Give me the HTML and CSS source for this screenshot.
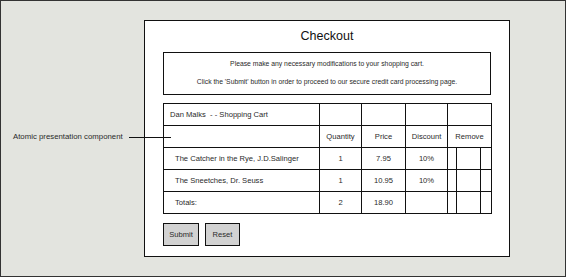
FILE: index.html
```html
<!DOCTYPE html>
<html lang="en">

<head>
    <meta charset="UTF-8">
    <meta name="viewport" content="width=device-width, initial-scale=1.0">
    <title>Checkout</title>
    <link rel="stylesheet" href="styles.css">
</head>

<body>

    <div class="frame">
        <div class="callout">
            <span class="callout-label">Atomic presentation component</span>
            <span class="callout-line"></span>
        </div>

        <div class="checkout-panel">
            <h1>Checkout</h1>

            <div class="message-box">
                <p>Please make any necessary modifications to your shopping cart.</p>
                <p>Click the 'Submit' button in order to proceed to our secure credit card processing page.</p>
            </div>

            <table class="cart-table">
                <colgroup>
                    <col class="col-name">
                    <col class="col-qty">
                    <col class="col-price">
                    <col class="col-discount">
                    <col class="col-r1">
                    <col class="col-r2">
                    <col class="col-r3">
                </colgroup>
                <tr>
                    <td class="cart-owner">Dan Malks &nbsp;- - Shopping Cart</td>
                    <td></td>
                    <td></td>
                    <td></td>
                    <td colspan="3"></td>
                </tr>
                <tr class="head-row">
                    <td></td>
                    <td>Quantity</td>
                    <td>Price</td>
                    <td>Discount</td>
                    <td colspan="3">Remove</td>
                </tr>
                <tr>
                    <td class="item">The Catcher in the Rye, J.D.Salinger</td>
                    <td>1</td>
                    <td>7.95</td>
                    <td>10%</td>
                    <td></td>
                    <td></td>
                    <td></td>
                </tr>
                <tr>
                    <td class="item">The Sneetches, Dr. Seuss</td>
                    <td>1</td>
                    <td>10.95</td>
                    <td>10%</td>
                    <td></td>
                    <td></td>
                    <td></td>
                </tr>
                <tr>
                    <td class="item">Totals:</td>
                    <td>2</td>
                    <td>18.90</td>
                    <td></td>
                    <td></td>
                    <td></td>
                    <td></td>
                </tr>
            </table>

            <div class="actions">
                <button type="submit" class="btn btn-submit">Submit</button>
                <button type="reset" class="btn btn-reset">Reset</button>
            </div>
        </div>
    </div>

</body>

</html>
```

FILE: styles.css
```css
:root {
    --bg-color: #e3e4df;
    --panel-color: #fff;
    --line-color: #111;
    --text-color: #2a2a2a;
    --button-color: #d2d2d2;
}

* {
    box-sizing: border-box;
}

body {
    margin: 0;
    font-family: "Liberation Sans", Arial, sans-serif;
    color: var(--text-color);
}

.frame {
    position: relative;
    width: 566px;
    height: 277px;
    padding: 19px 0 0 143px;
    background-color: var(--bg-color);
    border: 1px solid #333;
}

/* annotation pointing into the cart table */
.callout {
    position: absolute;
    left: 12px;
    top: 130px;
    display: flex;
    align-items: center;
    z-index: 2;
}

.callout-label {
    font-size: 7.8px;
    line-height: 12px;
}

.callout-line {
    display: block;
    width: 42px;
    height: 1px;
    margin-left: 6px;
    background-color: var(--line-color);
}

.checkout-panel {
    width: 366px;
    padding: 0 18px 10px;
    background-color: var(--panel-color);
    border: 1px solid var(--line-color);
}

.checkout-panel h1 {
    margin: 0;
    font-size: 12.5px;
    font-weight: normal;
    line-height: 31px;
    text-align: center;
    color: #111;
}

.message-box {
    height: 43px;
    padding: 2px 0 3px;
    border: 1px solid var(--line-color);
    text-align: center;
}

.message-box p {
    margin: 0;
    font-size: 6.8px;
    line-height: 18px;
}

.cart-table {
    width: 328px;
    margin-top: 8px;
    border-collapse: collapse;
    table-layout: fixed;
}

.col-name { width: 156px; }
.col-qty { width: 42px; }
.col-price { width: 44px; }
.col-discount { width: 42px; }
.col-r1 { width: 9px; }
.col-r2 { width: 24px; }
.col-r3 { width: 11px; }

.cart-table td {
    height: 22px;
    padding: 0;
    border: 1px solid var(--line-color);
    font-size: 7.6px;
    text-align: center;
    white-space: nowrap;
}

.cart-table td.cart-owner {
    padding-left: 6px;
    text-align: left;
}

.cart-table td.item {
    padding-left: 11px;
    text-align: left;
}

.actions {
    display: flex;
    gap: 6px;
    margin-top: 9px;
}

.btn {
    height: 23px;
    padding: 0;
    font-family: inherit;
    font-size: 7.6px;
    color: var(--text-color);
    background-color: var(--button-color);
    border: 1px solid var(--line-color);
    border-radius: 0;
}

.btn-submit {
    width: 36px;
}

.btn-reset {
    width: 35px;
}
```
